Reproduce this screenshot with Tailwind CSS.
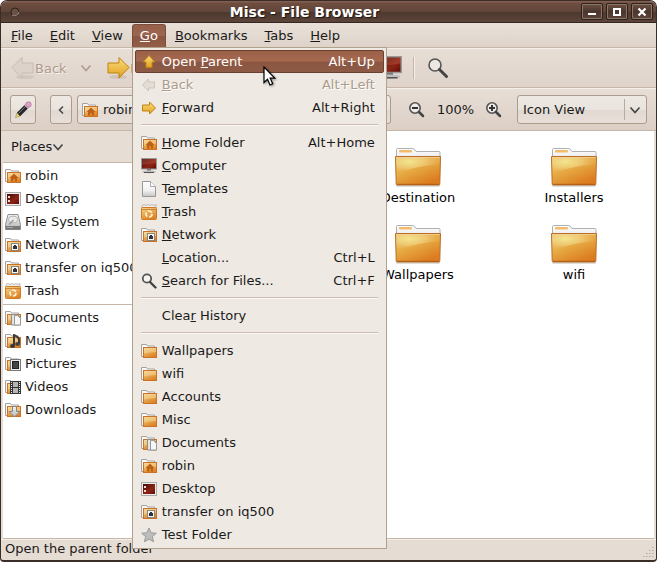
<!DOCTYPE html>
<html lang="en">
<head>
<meta charset="utf-8">
<title>Misc - File Browser</title>
<script src="https://cdn.jsdelivr.net/npm/@tailwindcss/browser@4"></script>
</head>
<body class="bg-white font-['DejaVu_Sans',sans-serif] text-[13px] leading-[23px] text-[#1a1a1a]">
<svg width="0" height="0" class="absolute" aria-hidden="true">
  <defs>
    <linearGradient id="gFold" x1="0" y1="0" x2="0.5" y2="1"><stop offset="0" stop-color="#f3d68c"/><stop offset="1" stop-color="#dd8426"/></linearGradient>
    <linearGradient id="gArrow" x1="0" y1="0" x2="0" y2="1"><stop offset="0" stop-color="#fbdc7d"/><stop offset="1" stop-color="#e2a01f"/></linearGradient>
    <linearGradient id="gRed" x1="0" y1="0" x2="1" y2="1"><stop offset="0" stop-color="#3a0d0a"/><stop offset="0.6" stop-color="#8f2416"/><stop offset="1" stop-color="#5a0d08"/></linearGradient>
    <linearGradient id="gGrey" x1="0" y1="0" x2="0" y2="1"><stop offset="0" stop-color="#f4f4f4"/><stop offset="1" stop-color="#b5b5b5"/></linearGradient>
    <linearGradient id="gBig" x1="0" y1="0" x2="0.6" y2="1"><stop offset="0" stop-color="#ebc486"/><stop offset="0.4" stop-color="#e8b44b"/><stop offset="1" stop-color="#dc7c20"/></linearGradient>
    <radialGradient id="gGlow" cx="0.3" cy="0.3" r="0.75"><stop offset="0" stop-color="#f2e68e"/><stop offset="0.5" stop-color="#f0cf7c" stop-opacity="0.75"/><stop offset="1" stop-color="#e9a550" stop-opacity="0.15"/></radialGradient>
    <linearGradient id="gTab" x1="0" y1="0" x2="0" y2="1"><stop offset="0" stop-color="#fff"/><stop offset="0.6" stop-color="#f0f0f0"/><stop offset="1" stop-color="#c5c5c5"/></linearGradient>
    <symbol id="folder" viewBox="0 0 16 16"><path d="M3 13.500H.5V1.500h5l1 1.500h7V7" fill="#fafafa" stroke="#a2a2a2"/><rect x="2.500" y="4.500" width="13" height="10" fill="url(#gFold)" stroke="#cb7228"/><path d="M3 5h12v4c-4 0-8 .5-12 1.500z" fill="#fbe7ad" opacity=".4"/></symbol>
    <symbol id="home" viewBox="0 0 16 16"><use href="#folder"/><path d="M9 5.500 4.500 10H6v3.500h2.300V11h1.500v2.500H12V10h1.500z" fill="#bd5f17"/></symbol>
    <symbol id="net" viewBox="0 0 16 16"><use href="#folder"/><rect x="6.500" y="6.500" width="7" height="7" fill="#f5f5f5" stroke="#878787"/><path d="M8 9h1V8h2v1h1v3H8z" fill="#30323b"/></symbol>
    <symbol id="docs" viewBox="0 0 16 16"><use href="#folder"/><path d="M6.500 4.500H12l3.500 3V15h-9z" fill="#e5e5e5" stroke="#8d8d8d"/><path d="M9.500 5.500h3l3 3V15h-6z" fill="#f7f7f7" stroke="#999"/></symbol>
    <symbol id="music" viewBox="0 0 16 16"><use href="#folder"/><path d="M8 2c2 0 5 2 6 4v5.500M9 3v10" stroke="#3c3c3c" stroke-width="2" fill="none"/><ellipse cx="7.500" cy="13" rx="2.500" ry="2" fill="#3a3a3a"/><ellipse cx="12.500" cy="11" rx="2.300" ry="2" fill="#444"/></symbol>
    <symbol id="pics" viewBox="0 0 16 16"><use href="#folder"/><rect x="5.500" y="3.500" width="10" height="11" fill="#eee" stroke="#777"/><rect x="7.500" y="5.500" width="6" height="7" fill="#444" stroke="#222"/></symbol>
    <symbol id="video" viewBox="0 0 16 16"><use href="#folder"/><rect x="5" y="2" width="11" height="13" fill="#343434"/><path d="M8 3h5v5H8zM8 9h5v5H8z" fill="#b4b4b4"/><path d="M6.500 3v12M14.500 3v12" stroke="#eee" stroke-dasharray="1 1"/></symbol>
    <symbol id="down" viewBox="0 0 16 16"><use href="#folder"/><path d="M7.500 4.500h4v5h3.500l-5.500 5.500L4 9.500h3.500z" fill="url(#gGrey)" stroke="#858585"/></symbol>
    <symbol id="desk" viewBox="0 0 16 16"><rect x=".5" y="1.500" width="15" height="13" fill="#eee" stroke="#aaa"/><rect x="2" y="3" width="12" height="10" fill="url(#gRed)"/><path d="M3 5h2v2H3zM3 9h2v2H3z" fill="#f3d9d2"/></symbol>
    <symbol id="disk" viewBox="0 0 16 16"><path d="M3 .5h10l2.500 10v5H.5v-5z" fill="url(#gGrey)" stroke="#8f8f8f"/><ellipse cx="8" cy="5.500" rx="4.500" ry="3.300" fill="#e9e9e9" stroke="#b3b3b3"/><path d="M4 10.500 8.500 6" stroke="#999" stroke-width="1.500"/><path d="M1 12h14v3.500H1z" fill="#777"/><path d="M2 13.500h6" stroke="#aaa"/></symbol>
    <symbol id="trash" viewBox="0 0 16 16"><path d="M1 1.500 3 .5l2 1 2-1 2 1 2-1 2 1 2-1V4H1z" fill="#eee" stroke="#999" stroke-width=".6"/><rect x=".5" y="3.500" width="15" height="12" rx="1" fill="url(#gFold)" stroke="#d07a22"/><path d="M1 5.500h14" stroke="#c56c17" stroke-width=".7"/><circle cx="8" cy="10" r="3" fill="none" stroke="#fff3d4" stroke-width="1.700" stroke-dasharray="4.500 1.800"/></symbol>
    <symbol id="comp" viewBox="0 0 16 16"><rect x=".5" y=".5" width="15" height="10.500" fill="url(#gRed)" stroke="#999"/><path d="M1 1h14v4L1 7z" fill="#c76351" opacity=".35"/><path d="M6 11h4v2H6z" fill="#777"/><ellipse cx="8" cy="13.800" rx="7" ry="1.500" fill="#bdbdbd"/><path d="M3 14.500h10" stroke="#555"/></symbol>
    <symbol id="page" viewBox="0 0 16 16"><path d="M1.500.5h8l5 5v10h-13z" fill="url(#gTab)" stroke="#989898"/><path d="M9.500.5v5h5" fill="#fff" stroke="#aaa"/></symbol>
    <symbol id="search" viewBox="0 0 16 16"><circle cx="6" cy="5.500" r="4.200" fill="#f6f4f1" stroke="#555" stroke-width="1.800"/><path d="m9 9 5.500 5.500" stroke="#444" stroke-width="2.400" stroke-linecap="round"/></symbol>
    <symbol id="star" viewBox="0 0 16 16"><path d="m8 1 2.100 4.800 5.200.4-4 3.500 1.300 5.100L8 12.200l-4.600 2.600 1.300-5.100-4-3.500 5.200-.4z" fill="#bdbdbd" stroke="#9b9b9b"/></symbol>
    <symbol id="up" viewBox="0 0 16 16"><path d="M8 1.500 14 8h-3v5.500H5V8H2z" fill="url(#gArrow)" stroke="#bd8310" stroke-linejoin="round"/></symbol>
    <symbol id="fwd" viewBox="0 0 16 16"><path d="M14.500 8 8.500 2v3h-7v6h7v3z" fill="url(#gArrow)" stroke="#bd8310" stroke-linejoin="round"/></symbol>
    <symbol id="back" viewBox="0 0 16 16"><path d="M1.500 8 7.500 2v3h6v6h-6v3z" fill="#e4ddd6" stroke="#cbc5bd" stroke-linejoin="round"/></symbol>
    <symbol id="chev" viewBox="0 0 12 12"><path d="m1.500 3.500 4.500 5 4.500-5" fill="none" stroke="currentColor" stroke-width="1.600"/></symbol>
    <symbol id="bigfolder" viewBox="0 0 48 40"><rect x="2" y="36" width="44" height="3" rx="1.500" fill="#000" opacity=".13"/><path d="M2.500 12V1.500Q2.500.5 3.500.5H18q2 0 3 1.500l1 1.500h23q1 0 1 1V12z" fill="url(#gTab)" stroke="#b0b0b0"/><rect x="5" y="2" width="13" height="2.500" rx="1" fill="#f3bb6b"/><path d="M1.500 8.500h45l-.7 27.500q0 1-1 1H3.200q-1 0-1-1z" fill="url(#gBig)" stroke="#bb6e26"/><path d="M2 9h44v7C32 17 18 20 3 25z" fill="url(#gGlow)"/><path d="M2.500 9.500h43" stroke="#f3d3a2" opacity=".7"/><path d="M3 36.300h42" stroke="#a0520f" opacity=".7"/></symbol>
  </defs>
</svg>

<div class="flex h-screen flex-col overflow-hidden rounded-t-[7px] rounded-b-[4px] border border-b-2 border-[#3a2c26] bg-[#e5dcd3]">
  <header class="flex h-[22px] shrink-0 items-center border-b border-[#35261f] bg-[linear-gradient(#866253_0%,#6d4d40_12%,#614639_50%,#4c382f_52%,#5c4439_100%)] pr-[3px] pl-[9px]">
    <svg width="10" height="10" aria-hidden="true"><circle cx="5" cy="5" r="4" fill="#6a5146" stroke="#2d211b"/><path d="M2 8a4.500 4.500 0 0 0 7-3" fill="none" stroke="#a18a7e"/></svg>
    <h1 class="flex-1 pl-[8px] text-center text-[14px] font-bold leading-[20px] text-white [text-shadow:1px_1px_1px_#1c1410]">Misc - File Browser</h1>
    <div class="flex gap-[3px]">
      <button aria-label="Minimize" class="flex h-[17px] w-[22px] items-center justify-center rounded-[2px] border border-[#2d211b] bg-[linear-gradient(#6d5143,#4b372e_50%,#5c443a)] shadow-[inset_0_0_0_1px_#8d7568]"><svg width="10" height="10"><path d="M1 6h8v2H1z" fill="#fff"/></svg></button>
      <button aria-label="Maximize" class="flex h-[17px] w-[22px] items-center justify-center rounded-[2px] border border-[#2d211b] bg-[linear-gradient(#6d5143,#4b372e_50%,#5c443a)] shadow-[inset_0_0_0_1px_#8d7568]"><svg width="10" height="10"><path d="M1 1h8v8H1zM3 3v4h4V3z" fill="#fff" fill-rule="evenodd"/></svg></button>
      <button aria-label="Close" class="flex h-[17px] w-[22px] items-center justify-center rounded-[2px] border border-[#2d211b] bg-[linear-gradient(#6d5143,#4b372e_50%,#5c443a)] shadow-[inset_0_0_0_1px_#8d7568]"><svg width="10" height="10"><path d="m1.500 1.500 7 7m0-7-7 7" stroke="#fff" stroke-width="2.200"/></svg></button>
    </div>
  </header>

  <nav class="flex h-[25px] shrink-0 gap-px border-b border-[#c8b6a8] bg-linear-to-b from-[#e9e1d9] to-[#ded3c9] pt-px pl-[2px]">
    <button class="px-2"><u>F</u>ile</button>
    <button class="px-2"><u>E</u>dit</button>
    <button class="px-2"><u>V</u>iew</button>
    <div class="relative">
      <button class="rounded-t-[3px] border-x border-t border-[#7b4d3b] bg-[linear-gradient(#955f4a,#9d6650_50%,#8a5642_52%,#945d47)] px-[7px] leading-[22px] text-white"><u>G</u>o</button>
      <div role="menu" class="absolute top-[23px] left-0 z-10 flex w-[255px] flex-col border border-[#b1a08c] bg-[#eee9e3] p-[2px]">
        <button role="menuitem" class="flex h-[23px] items-center gap-[5px] rounded-[2px] border border-[#6b4031] bg-[linear-gradient(#9b6049,#a5694f_45%,#8b5743_55%,#8d5a46)] px-[5px] text-white"><svg class="size-4"><use href="#up"/></svg><span class="flex-1 text-left">Open <u>P</u>arent</span><span class="pr-[3px]">Alt+Up</span></button>
        <button role="menuitem" disabled class="flex h-[23px] items-center gap-[5px] px-[6px] text-[#ac9a8b] [text-shadow:1px_1px_#fff]"><svg class="size-4"><use href="#back"/></svg><span class="flex-1 text-left"><u>B</u>ack</span><span class="pr-[3px]">Alt+Left</span></button>
        <button role="menuitem" class="flex h-[23px] items-center gap-[5px] px-[6px]"><svg class="size-4"><use href="#fwd"/></svg><span class="flex-1 text-left"><u>F</u>orward</span><span class="pr-[3px]">Alt+Right</span></button>
        <hr class="mx-[6px] mt-[5px] mb-[6px] border-[#cdbdb0] shadow-[0_1px_#fbf9f7]">
        <button role="menuitem" class="flex h-[23px] items-center gap-[5px] px-[6px]"><svg class="size-4"><use href="#home"/></svg><span class="flex-1 text-left"><u>H</u>ome Folder</span><span class="pr-[3px]">Alt+Home</span></button>
        <button role="menuitem" class="flex h-[23px] items-center gap-[5px] px-[6px]"><svg class="size-4"><use href="#comp"/></svg><span><u>C</u>omputer</span></button>
        <button role="menuitem" class="flex h-[23px] items-center gap-[5px] px-[6px]"><svg class="size-4"><use href="#page"/></svg><span>T<u>e</u>mplates</span></button>
        <button role="menuitem" class="flex h-[23px] items-center gap-[5px] px-[6px]"><svg class="size-4"><use href="#trash"/></svg><span><u>T</u>rash</span></button>
        <button role="menuitem" class="flex h-[23px] items-center gap-[5px] px-[6px]"><svg class="size-4"><use href="#net"/></svg><span><u>N</u>etwork</span></button>
        <button role="menuitem" class="flex h-[23px] items-center pr-[6px] pl-[27px]"><span class="flex-1 text-left"><u>L</u>ocation...</span><span class="pr-[3px]">Ctrl+L</span></button>
        <button role="menuitem" class="flex h-[23px] items-center gap-[5px] px-[6px]"><svg class="size-4"><use href="#search"/></svg><span class="flex-1 text-left"><u>S</u>earch for Files...</span><span class="pr-[3px]">Ctrl+F</span></button>
        <hr class="mx-[6px] mt-[5px] mb-[6px] border-[#cdbdb0] shadow-[0_1px_#fbf9f7]">
        <button role="menuitem" class="flex h-[23px] items-center pl-[27px]"><span>Clea<u>r</u> History</span></button>
        <hr class="mx-[6px] mt-[5px] mb-[6px] border-[#cdbdb0] shadow-[0_1px_#fbf9f7]">
        <button role="menuitem" class="flex h-[23px] items-center gap-[5px] px-[6px]"><svg class="size-4"><use href="#folder"/></svg><span>Wallpapers</span></button>
        <button role="menuitem" class="flex h-[23px] items-center gap-[5px] px-[6px]"><svg class="size-4"><use href="#folder"/></svg><span>wifi</span></button>
        <button role="menuitem" class="flex h-[23px] items-center gap-[5px] px-[6px]"><svg class="size-4"><use href="#folder"/></svg><span>Accounts</span></button>
        <button role="menuitem" class="flex h-[23px] items-center gap-[5px] px-[6px]"><svg class="size-4"><use href="#folder"/></svg><span>Misc</span></button>
        <button role="menuitem" class="flex h-[23px] items-center gap-[5px] px-[6px]"><svg class="size-4"><use href="#docs"/></svg><span>Documents</span></button>
        <button role="menuitem" class="flex h-[23px] items-center gap-[5px] px-[6px]"><svg class="size-4"><use href="#home"/></svg><span>robin</span></button>
        <button role="menuitem" class="flex h-[23px] items-center gap-[5px] px-[6px]"><svg class="size-4"><use href="#desk"/></svg><span>Desktop</span></button>
        <button role="menuitem" class="flex h-[23px] items-center gap-[5px] px-[6px]"><svg class="size-4"><use href="#net"/></svg><span>transfer on iq500</span></button>
        <button role="menuitem" class="flex h-[23px] items-center gap-[5px] px-[6px]"><svg class="size-4"><use href="#star"/></svg><span>Test Folder</span></button>
        <svg class="absolute top-[18px] left-[130px] drop-shadow-[1px_1px_1px_#0006]" width="13" height="21"><path d="M1 1v15.500l3.500-3.300 2.500 5.800 2.700-1.200-2.500-5.600h4.600z" fill="#fff" stroke="#000" stroke-width="1.200"/></svg>
      </div>
    </div>
    <button class="px-2"><u>B</u>ookmarks</button>
    <button class="px-2"><u>T</u>abs</button>
    <button class="px-2"><u>H</u>elp</button>
  </nav>

  <div class="flex h-10 shrink-0 items-center border-t border-b border-t-[#f4efea] border-b-[#c8b6a8] bg-linear-to-b from-[#e7ded6] to-[#dfd3ca] pl-[9px]">
    <button disabled class="flex items-center text-[#ac9a8b] [text-shadow:1px_1px_#f6f2ee]"><svg width="25" height="24"><ellipse cx="15" cy="21" rx="9" ry="2" fill="#d2c7bd"/><path d="M2 11.500 12 1.500V7h11v10H12v5z" fill="#dcd2c9" stroke="#c6bcb2" stroke-linejoin="round"/></svg>Back</button>
    <button disabled aria-label="Back history" class="ml-[13px] text-[#ac9c8f]"><svg class="size-3"><use href="#chev"/></svg></button>
    <button class="ml-[14px] flex w-[90px] items-center"><svg class="shrink-0" width="25" height="24"><ellipse cx="12" cy="21" rx="9" ry="2" fill="#cfc3b8"/><path d="M23 11.500 13 1.500V7H2v10h11v5z" fill="url(#gArrow)" stroke="#bd8310" stroke-linejoin="round"/></svg>Forward</button>
    <button aria-label="Computer" class="ml-[182px]"><svg class="size-6"><use href="#comp"/></svg></button>
    <span class="ml-[11px] h-[22px] w-[2px] border-r border-l border-r-[#f5f0ec] border-l-[#c5b5a8]"></span>
    <button aria-label="Search" class="ml-[11px]"><svg width="24" height="24"><circle cx="9" cy="9" r="6" fill="#ece7e2" stroke="#555" stroke-width="1.600"/><path d="m13.500 13.500 7 7" stroke="#444" stroke-width="3" stroke-linecap="round"/></svg></button>
  </div>

  <div class="flex h-[43px] shrink-0 items-center border-t border-b border-t-[#f4efea] border-b-[#c8b6a8] bg-linear-to-b from-[#e7ded6] to-[#dccfc5] pr-[9px] pl-[9px]">
    <button aria-label="Edit location" class="flex h-[29px] w-[26px] items-center justify-center rounded-[3px] border border-[#ab9c8e] bg-[linear-gradient(#efe9e4,#e9e3dd_50%,#e1d9d1_52%,#e7dfd8)]"><svg width="18" height="18"><path d="M1.500 16.500 3 12l3 3z" fill="#efe06c" stroke="#8c8350" stroke-width=".6"/><path d="m4.500 13.500 9-9" stroke="#292929" stroke-width="4.600"/><path d="m4.500 12.500 8-8" stroke="#777"/><path d="m12 6 1.500-1.500" stroke="#ccc" stroke-width="5"/><circle cx="14.500" cy="3.500" r="2.700" fill="#e3a1c8" stroke="#9c6785" stroke-width=".6"/></svg></button>
    <button aria-label="Scroll path left" class="ml-[14px] flex h-[29px] w-[22px] items-center justify-center rounded-[3px] border border-[#ab9c8e] bg-[linear-gradient(#efe9e4,#e9e3dd_50%,#e1d9d1_52%,#e7dfd8)]"><svg width="8" height="10"><path d="M6 1.500 2.500 5 6 8.500" fill="none" stroke="#444" stroke-width="1.500"/></svg></button>
    <button class="ml-[5px] flex h-[29px] w-[314px] items-center gap-[5px] rounded-[3px] border border-[#ab9c8e] bg-[linear-gradient(#efe9e4,#e9e3dd_50%,#e1d9d1_52%,#e7dfd8)] pl-[4px]"><svg class="size-4"><use href="#home"/></svg>robin</button>
    <button aria-label="Zoom out" class="ml-[17px]"><svg width="18" height="18"><circle cx="7" cy="7" r="5.200" fill="#f1ece8" stroke="#555" stroke-width="1.600"/><path d="M4 7h6" stroke="#333" stroke-width="2"/><path d="m11 11 4 4" stroke="#444" stroke-width="2.500" stroke-linecap="round"/></svg></button>
    <span class="ml-[11px]">100%</span>
    <button aria-label="Zoom in" class="ml-[11px]"><svg width="18" height="18"><circle cx="7" cy="7" r="5.200" fill="#f1ece8" stroke="#555" stroke-width="1.600"/><path d="M4 7h6M7 4v6" stroke="#333" stroke-width="2"/><path d="m11 11 4 4" stroke="#444" stroke-width="2.500" stroke-linecap="round"/></svg></button>
    <div class="relative ml-auto flex w-[130px] items-center">
      <select aria-label="View mode" class="h-[29px] w-full appearance-none rounded-[3px] border border-[#ab9c8e] bg-[linear-gradient(#efe9e4,#e9e3dd_50%,#e1d9d1_52%,#e7dfd8)] pl-[5px]"><option>Icon View</option></select>
      <span class="pointer-events-none absolute right-[6px] flex h-[21px] items-center border-l border-[#baaa9d] pl-[4px] text-[#444]"><svg class="size-3"><use href="#chev"/></svg></span>
    </div>
  </div>

  <div class="mx-[2px] flex min-h-0 flex-1 border-b border-[#c8b6a8] bg-white">
    <aside class="w-[180px] shrink-0 border-r border-[#c8b6a8]">
      <button class="flex h-8 w-full items-center border-b border-[#c8b6a8] bg-[#e6ddd5] pl-[8px]">Places<svg class="size-3 text-[#444]"><use href="#chev"/></svg></button>
      <ul class="pt-px pl-[2px]">
        <li class="flex items-center gap-[4px]"><svg class="size-4"><use href="#home"/></svg>robin</li>
        <li class="flex items-center gap-[4px]"><svg class="size-4"><use href="#desk"/></svg>Desktop</li>
        <li class="flex items-center gap-[4px]"><svg class="size-4"><use href="#disk"/></svg>File System</li>
        <li class="flex items-center gap-[4px]"><svg class="size-4"><use href="#net"/></svg>Network</li>
        <li class="flex items-center gap-[4px]"><svg class="size-4"><use href="#net"/></svg>transfer on iq500</li>
        <li class="flex items-center gap-[4px]"><svg class="size-4"><use href="#trash"/></svg>Trash</li>
      </ul>
      <hr class="mt-[2px] mb-px border-[#c8b6a8]">
      <ul class="pl-[2px]">
        <li class="flex items-center gap-[4px]"><svg class="size-4"><use href="#docs"/></svg>Documents</li>
        <li class="flex items-center gap-[4px]"><svg class="size-4"><use href="#music"/></svg>Music</li>
        <li class="flex items-center gap-[4px]"><svg class="size-4"><use href="#pics"/></svg>Pictures</li>
        <li class="flex items-center gap-[4px]"><svg class="size-4"><use href="#video"/></svg>Videos</li>
        <li class="flex items-center gap-[4px]"><svg class="size-4"><use href="#down"/></svg>Downloads</li>
      </ul>
    </aside>
    <main class="flex-1 pt-[17px] pl-[157px]">
      <ul class="grid grid-cols-[156px_156px] gap-y-[14px] text-black">
        <li class="flex h-[63px] flex-col items-center"><svg width="48" height="40"><use href="#bigfolder"/></svg><span class="leading-[19px]">Destination</span></li>
        <li class="flex h-[63px] flex-col items-center"><svg width="48" height="40"><use href="#bigfolder"/></svg><span class="leading-[19px]">Installers</span></li>
        <li class="flex h-[63px] flex-col items-center"><svg width="48" height="40"><use href="#bigfolder"/></svg><span class="leading-[19px]">Wallpapers</span></li>
        <li class="flex h-[63px] flex-col items-center"><svg width="48" height="40"><use href="#bigfolder"/></svg><span class="leading-[19px]">wifi</span></li>
      </ul>
    </main>
  </div>

  <footer class="flex h-[21px] shrink-0 items-start justify-between border-t border-[#f3eee9] pr-[2px] pl-[4px] leading-[17px]">
    <span>Open the parent folder</span>
    <svg class="self-end" width="12" height="14"><path d="M10 1.500h1.500M7 4.500h1.500M10 4.500h1.500M4 7.500h1.500M7 7.500h1.500M10 7.500h1.500M1 10.500h1.500M4 10.500h1.500M7 10.500h1.500M10 10.500h1.500" stroke="#b9a99b"/></svg>
  </footer>
</div>
</body>
</html>
